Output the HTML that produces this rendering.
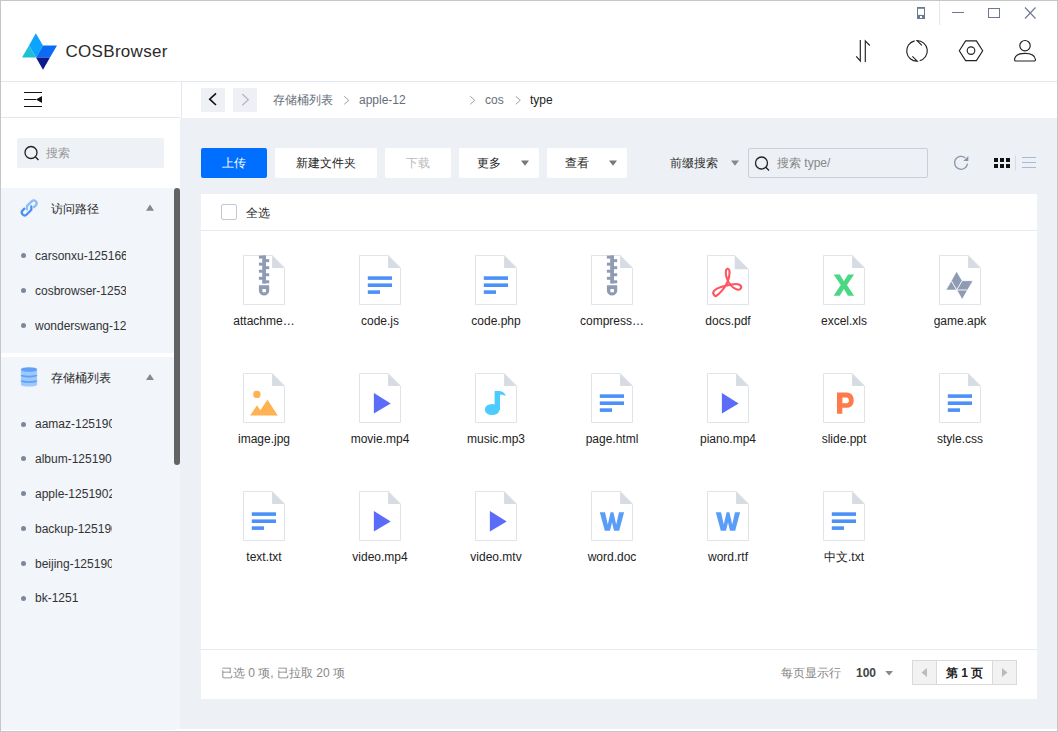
<!DOCTYPE html>
<html><head><meta charset="utf-8">
<style>
*{box-sizing:border-box;margin:0;padding:0}
html,body{width:1058px;height:732px;overflow:hidden;background:#fff}
body{position:relative;font-family:"Liberation Sans",sans-serif;font-size:12px;color:#333}
.a{position:absolute}
.t{position:absolute;white-space:nowrap;line-height:14px}
svg{position:absolute;overflow:visible}
</style></head><body>
<!-- window border -->
<div class="a" style="left:0;top:0;width:1058px;height:732px;border:1px solid #c6c6c6;z-index:50;pointer-events:none"></div>

<!-- header -->
<svg style="left:0;top:0" width="80" height="80" viewBox="0 0 80 80">
  <polygon points="22,57.6 29,45.4 36,57.6" fill="#1ec0d6"/>
  <polygon points="35.8,33.2 29,45.4 36,57.6 43,45.4" fill="#0ba5ff"/>
  <polygon points="43,45.4 57,45.4 50,57.6 36,57.6" fill="#0a6cf5"/>
  <polygon points="36,57.6 50,57.6 43,69.7" fill="#0c1a8c"/>
</svg>
<div class="t" style="left:65.5px;top:43px;font-size:17px;line-height:18px;color:#2a2a2a;letter-spacing:0.3px">COSBrowser</div>

<!-- window controls -->
<svg style="left:0;top:0" width="1058" height="30">
  <rect x="917" y="7" width="8" height="12" fill="#6b7a93"/>
  <rect x="918" y="8.8" width="6" height="6.1" fill="#fff"/>
  <rect x="920" y="16" width="2" height="2" fill="#fff"/>
  <line x1="939.5" y1="1" x2="939.5" y2="25" stroke="#e3e6ec" stroke-width="1"/>
  <line x1="952" y1="12.5" x2="964" y2="12.5" stroke="#6b7890" stroke-width="1"/>
  <rect x="988.5" y="8.5" width="11" height="9" fill="none" stroke="#6b7890" stroke-width="1"/>
  <path d="M1025 7.5 L1035.5 18.5 M1035.5 7.5 L1025 18.5" stroke="#6b7890" stroke-width="1.1"/>
</svg>

<!-- header tool icons -->
<svg style="left:0;top:0" width="1058" height="80" fill="none" stroke="#222" stroke-width="1.15">
  <path d="M860.3 40 V61 L856.2 56.3"/>
  <path d="M865.3 61.9 V40.9 L869.8 45.5"/>
  <path d="M914.6 40.83 A10.3 10.3 0 0 0 917.3 61.15 L912.4 56.4"/>
  <path d="M919.7 60.79 A10.3 10.3 0 0 0 917 40.55 L921.9 45.3"/>
  <polygon points="959.3,50.7 965.6,40.9 976.4,40.9 982.7,50.7 976.4,60.6 965.6,60.6"/>
  <circle cx="971" cy="50.6" r="3.8"/>
  <circle cx="1025" cy="45.7" r="5.2"/>
  <path d="M1016 61 H1034 A1.4 1.4 0 0 0 1035.5 59.5 C1035 55.5 1030.5 53.4 1025 53.4 C1019.5 53.4 1015 55.5 1014.5 59.5 A1.4 1.4 0 0 0 1016 61Z"/>
</svg>

<div class="a" style="left:0;top:81px;width:1058px;height:1px;background:#e3e8ef"></div>

<!-- sidebar toolbar -->
<div class="a" style="left:0;top:117px;width:180px;height:1px;background:#e3e8ef"></div>
<div class="a" style="left:181px;top:82px;width:1px;height:36px;background:#e3e8ef"></div>
<svg style="left:0;top:0" width="60" height="120">
  <line x1="24" y1="92.5" x2="42" y2="92.5" stroke="#111" stroke-width="1"/>
  <line x1="24" y1="99.5" x2="36" y2="99.5" stroke="#111" stroke-width="1"/>
  <line x1="24" y1="106.5" x2="42" y2="106.5" stroke="#111" stroke-width="1"/>
  <polygon points="36,99.5 42,96 42,103" fill="#111"/>
</svg>

<!-- sidebar search -->
<div class="a" style="left:17px;top:138px;width:147px;height:30px;background:#eef1f6;border-radius:2px"></div>
<svg style="left:0;top:0" width="60" height="180" fill="none" stroke="#222" stroke-width="1.3">
  <circle cx="31" cy="152.5" r="6"/>
  <line x1="35.3" y1="156.8" x2="38.5" y2="160"/>
</svg>
<div class="t" style="left:46px;top:146px;color:#999">搜索</div>

<!-- sidebar sections -->
<div class="a" style="left:1px;top:188px;width:179px;height:165px;background:#f2f5fa"></div>
<div class="a" style="left:1px;top:357px;width:179px;height:373px;background:#f2f5fa"></div>
<div class="a" style="left:174px;top:188px;width:6px;height:277px;background:#636363;border-radius:3px"></div>

<svg style="left:0;top:0" width="60" height="400">
  <g transform="translate(29.2 207.9) rotate(-45) scale(1.13)" fill="none" stroke-width="2.0" stroke-linecap="round">
    <path d="M-3.5 -2.55 H-5.65 A2.55 2.55 0 0 0 -5.65 2.55 H0.13 L2.26 0.42" stroke="#4a90f5"/>
    <path d="M3.5 2.55 H5.65 A2.55 2.55 0 0 0 5.65 -2.55 H-0.27 L-2.47 -0.35" stroke="#8dbcfa"/>
  </g>
  <g>
    <path d="M20.9 369.5 V384.7 A8.1 1.9 0 0 0 37.1 384.7 V369.5 Z" fill="#9fc8fc"/>
    <ellipse cx="29" cy="369.5" rx="8.1" ry="2.35" fill="#5fa1fa"/>
    <path d="M21.5 375.1 A7.5 1.45 0 0 0 36.5 375.1" fill="none" stroke="#5fa1fa" stroke-width="1.7"/>
    <path d="M21.5 380.4 A7.5 1.65 0 0 0 36.5 380.4" fill="none" stroke="#5fa1fa" stroke-width="1.7"/>
  </g>
  <polygon points="146,210.7 150,204.6 154,210.7" fill="#888"/>
  <polygon points="146,380 150,374 154,380" fill="#888"/>
</svg>
<div class="t" style="left:51px;top:202px;font-size:12px;color:#2a2a2a">访问路径</div>
<div class="t" style="left:51px;top:371px;font-size:12px;color:#2a2a2a">存储桶列表</div>

<!--SIDE-->
<div class="a" style="left:21px;top:253.0px;width:5px;height:5px;border-radius:50%;background:#7d889b"></div>
<div class="t" style="left:35px;top:248.8px;width:91px;overflow:hidden;color:#333">carsonxu-1251668577</div>
<div class="a" style="left:21px;top:288.0px;width:5px;height:5px;border-radius:50%;background:#7d889b"></div>
<div class="t" style="left:35px;top:283.8px;width:91px;overflow:hidden;color:#333">cosbrowser-1253960454</div>
<div class="a" style="left:21px;top:323.0px;width:5px;height:5px;border-radius:50%;background:#7d889b"></div>
<div class="t" style="left:35px;top:318.8px;width:91px;overflow:hidden;color:#333">wonderswang-1250000000</div>
<div class="a" style="left:21px;top:421.5px;width:5px;height:5px;border-radius:50%;background:#7d889b"></div>
<div class="t" style="left:35px;top:417.3px;width:77px;overflow:hidden;color:#333">aamaz-1251902136</div>
<div class="a" style="left:21px;top:456.3px;width:5px;height:5px;border-radius:50%;background:#7d889b"></div>
<div class="t" style="left:35px;top:452.1px;width:77px;overflow:hidden;color:#333">album-1251902136</div>
<div class="a" style="left:21px;top:491.1px;width:5px;height:5px;border-radius:50%;background:#7d889b"></div>
<div class="t" style="left:35px;top:486.9px;width:77px;overflow:hidden;color:#333">apple-1251902136</div>
<div class="a" style="left:21px;top:525.9px;width:5px;height:5px;border-radius:50%;background:#7d889b"></div>
<div class="t" style="left:35px;top:521.7px;width:77px;overflow:hidden;color:#333">backup-1251902136</div>
<div class="a" style="left:21px;top:560.7px;width:5px;height:5px;border-radius:50%;background:#7d889b"></div>
<div class="t" style="left:35px;top:556.5px;width:77px;overflow:hidden;color:#333">beijing-1251902136</div>
<div class="a" style="left:21px;top:595.5px;width:5px;height:5px;border-radius:50%;background:#7d889b"></div>
<div class="t" style="left:35px;top:591.3px;width:77px;overflow:hidden;color:#333">bk-1251</div>
<!--/SIDE-->

<!-- breadcrumb -->
<div class="a" style="left:201px;top:88px;width:24px;height:24px;background:#eef0f5"></div>
<div class="a" style="left:233px;top:88px;width:24px;height:24px;background:#eef0f5"></div>
<svg style="left:0;top:0" width="600" height="120" fill="none" stroke-width="1.5">
  <path d="M216 93.4 L209.7 99.2 L216 105" stroke="#111" stroke-width="1.6"/>
  <path d="M242.3 94.1 L248.3 99.7 L242.3 105.3" stroke="#b6bac9" stroke-width="1.4"/>
  <g stroke="#9aa0aa" stroke-width="1">
    <path d="M344.2 96.3 L348.8 100.3 L344.2 104.3"/>
    <path d="M470.2 96.3 L474.8 100.3 L470.2 104.3"/>
    <path d="M515.7 96.3 L520.3 100.3 L515.7 104.3"/>
  </g>
</svg>
<div class="t" style="left:273px;top:93px;color:#666e7a">存储桶列表</div>
<div class="t" style="left:359px;top:93px;color:#666e7a">apple-12</div>
<div class="t" style="left:485px;top:93px;color:#666e7a">cos</div>
<div class="t" style="left:530px;top:93px;color:#222">type</div>

<!-- content bg -->
<div class="a" style="left:180px;top:118px;width:877px;height:611px;background:#edf0f5"></div>

<!-- toolbar -->
<div class="a" style="left:201px;top:148px;width:66px;height:30px;background:#006eff;border-radius:2px"></div>
<div class="t" style="left:222px;top:156px;color:#fff">上传</div>
<div class="a" style="left:275px;top:148px;width:102px;height:30px;background:#fff;border-radius:2px"></div>
<div class="t" style="left:296px;top:156px;color:#222">新建文件夹</div>
<div class="a" style="left:385px;top:148px;width:66px;height:30px;background:#fff;border-radius:2px"></div>
<div class="t" style="left:406px;top:156px;color:#bbb">下载</div>
<div class="a" style="left:459px;top:148px;width:80px;height:30px;background:#fff;border-radius:2px"></div>
<div class="t" style="left:477px;top:156px;color:#222">更多</div>
<div class="a" style="left:547px;top:148px;width:80px;height:30px;background:#fff;border-radius:2px"></div>
<div class="t" style="left:565px;top:156px;color:#222">查看</div>
<div class="t" style="left:670px;top:156px;color:#333">前缀搜索</div>
<svg style="left:0;top:0" width="1058" height="200">
  <polygon points="521,160.5 529,160.5 525,165.8" fill="#777"/>
  <polygon points="609,160.5 617,160.5 613,165.8" fill="#777"/>
  <polygon points="731,160.5 739,160.5 735,165.8" fill="#888"/>
</svg>
<div class="a" style="left:748px;top:148px;width:180px;height:30px;border:1px solid #c9ced8;border-radius:2px"></div>
<svg style="left:0;top:0" width="1058" height="200" fill="none" stroke="#222" stroke-width="1.3">
  <circle cx="761.5" cy="163" r="6"/>
  <line x1="765.8" y1="167.3" x2="769" y2="170.5"/>
  <path d="M965.2 157.8 A6.5 6.5 0 1 0 967.5 163.6" stroke="#8a94a6" stroke-width="1.3"/>
  <polygon points="968.3,156 968.3,161 963.3,161" fill="#8a94a6" stroke="none"/>
  <g fill="#111" stroke="none">
    <rect x="994" y="158" width="4" height="4"/><rect x="1000" y="158" width="4" height="4"/><rect x="1006" y="158" width="4" height="4"/>
    <rect x="994" y="164" width="4" height="4"/><rect x="1000" y="164" width="4" height="4"/><rect x="1006" y="164" width="4" height="4"/>
  </g>
  <line x1="1015.5" y1="155.5" x2="1015.5" y2="170.5" stroke="#d5dae3" stroke-width="1"/>
  <g stroke="#a9b9d3" stroke-width="1">
    <line x1="1022" y1="157.5" x2="1036" y2="157.5"/>
    <line x1="1022" y1="162.5" x2="1036" y2="162.5"/>
    <line x1="1022" y1="167.5" x2="1036" y2="167.5"/>
  </g>
</svg>
<div class="t" style="left:777px;top:156px;color:#888">搜索 type/</div>

<!-- panel -->
<div class="a" style="left:201px;top:194px;width:836px;height:505px;background:#fff"></div>
<div class="a" style="left:201px;top:230px;width:836px;height:1px;background:#e6e9ef"></div>
<div class="a" style="left:201px;top:649px;width:836px;height:1px;background:#e6e9ef"></div>
<div class="a" style="left:221px;top:204px;width:16px;height:16px;border:1px solid #c4c8cf;border-radius:2px;background:#fff"></div>
<div class="t" style="left:246px;top:205.6px;color:#222">全选</div>

<!--GRID-->
<svg style="left:243px;top:255px" width="42" height="50" viewBox="0 0 42 50"><path d="M0.5 0.5 H29.1 L41.5 12.9 V49.5 H0.5 Z" fill="#fff" stroke="#dfe3ea"/><path d="M29.1 0.5 V12.9 H41.5 Z" fill="#d7dbe2"/><g fill="#8f9bb3"><rect x="19.4" y="0.5" width="3.5" height="28"/><rect x="15.9" y="0.60" width="7" height="3"/><rect x="19.4" y="4.13" width="6.8" height="3"/><rect x="15.9" y="7.66" width="7" height="3"/><rect x="19.4" y="11.19" width="6.8" height="3"/><rect x="15.9" y="14.72" width="7" height="3"/><rect x="19.4" y="18.25" width="6.8" height="3"/><rect x="15.9" y="21.78" width="7" height="3"/><rect x="19.4" y="25.31" width="6.8" height="3"/><path d="M15.9 30.3 H26.2 V35.4 A5.15 5.15 0 0 1 15.9 35.4 Z"/></g><rect x="19.4" y="34" width="3.5" height="3.2" fill="#fff"/></svg>
<div class="t" style="left:214px;top:314px;width:100px;text-align:center;color:#222">attachme…</div>
<svg style="left:359px;top:255px" width="42" height="50" viewBox="0 0 42 50"><path d="M0.5 0.5 H29.1 L41.5 12.9 V49.5 H0.5 Z" fill="#fff" stroke="#dfe3ea"/><path d="M29.1 0.5 V12.9 H41.5 Z" fill="#d7dbe2"/><g fill="#4b91f7"><rect x="8.8" y="21.3" width="24.2" height="3.6"/><rect x="8.8" y="28.4" width="24.2" height="3.6"/><rect x="8.8" y="35.3" width="12.2" height="3.6"/></g></svg>
<div class="t" style="left:330px;top:314px;width:100px;text-align:center;color:#222">code.js</div>
<svg style="left:475px;top:255px" width="42" height="50" viewBox="0 0 42 50"><path d="M0.5 0.5 H29.1 L41.5 12.9 V49.5 H0.5 Z" fill="#fff" stroke="#dfe3ea"/><path d="M29.1 0.5 V12.9 H41.5 Z" fill="#d7dbe2"/><g fill="#4b91f7"><rect x="8.8" y="21.3" width="24.2" height="3.6"/><rect x="8.8" y="28.4" width="24.2" height="3.6"/><rect x="8.8" y="35.3" width="12.2" height="3.6"/></g></svg>
<div class="t" style="left:446px;top:314px;width:100px;text-align:center;color:#222">code.php</div>
<svg style="left:591px;top:255px" width="42" height="50" viewBox="0 0 42 50"><path d="M0.5 0.5 H29.1 L41.5 12.9 V49.5 H0.5 Z" fill="#fff" stroke="#dfe3ea"/><path d="M29.1 0.5 V12.9 H41.5 Z" fill="#d7dbe2"/><g fill="#8f9bb3"><rect x="19.4" y="0.5" width="3.5" height="28"/><rect x="15.9" y="0.60" width="7" height="3"/><rect x="19.4" y="4.13" width="6.8" height="3"/><rect x="15.9" y="7.66" width="7" height="3"/><rect x="19.4" y="11.19" width="6.8" height="3"/><rect x="15.9" y="14.72" width="7" height="3"/><rect x="19.4" y="18.25" width="6.8" height="3"/><rect x="15.9" y="21.78" width="7" height="3"/><rect x="19.4" y="25.31" width="6.8" height="3"/><path d="M15.9 30.3 H26.2 V35.4 A5.15 5.15 0 0 1 15.9 35.4 Z"/></g><rect x="19.4" y="34" width="3.5" height="3.2" fill="#fff"/></svg>
<div class="t" style="left:562px;top:314px;width:100px;text-align:center;color:#222">compress…</div>
<svg style="left:707px;top:255px" width="42" height="50" viewBox="0 0 42 50"><path d="M0.5 0.5 H27.7 L41.5 14.3 V49.5 H0.5 Z" fill="#fff" stroke="#dfe3ea"/><path d="M27.7 0.5 V14.3 H41.5 Z" fill="#d7dbe2"/><path d="M7.5 40.5 C4 37.5 8 33.5 14 32 C20 30.5 28 27.5 32 29.5 C36 31.5 34 35.5 30 34.5 C26 33.5 22 29 20.5 25 C18.5 21 18 14 20.5 13.8 C23.5 13.6 23 21 20.5 27 C18 33 12 39.5 9 41 C8.5 41.3 8 41 7.5 40.5Z" fill="none" stroke="#ff5561" stroke-width="2.1"/></svg>
<div class="t" style="left:678px;top:314px;width:100px;text-align:center;color:#222">docs.pdf</div>
<svg style="left:823px;top:255px" width="42" height="50" viewBox="0 0 42 50"><path d="M0.5 0.5 H29.1 L41.5 12.9 V49.5 H0.5 Z" fill="#fff" stroke="#dfe3ea"/><path d="M29.1 0.5 V12.9 H41.5 Z" fill="#d7dbe2"/><path d="M10.6 19.6 H16.8 L20.9 26.3 L25 19.6 H31.1 L24 30 L31.1 40.8 H24.9 L20.9 34 L16.8 40.8 H10.6 L17.8 30 Z" fill="#4cd782"/></svg>
<div class="t" style="left:794px;top:314px;width:100px;text-align:center;color:#222">excel.xls</div>
<svg style="left:939px;top:255px" width="42" height="50" viewBox="0 0 42 50"><path d="M0.5 0.5 H29.1 L41.5 12.9 V49.5 H0.5 Z" fill="#fff" stroke="#dfe3ea"/><path d="M29.1 0.5 V12.9 H41.5 Z" fill="#d7dbe2"/><g fill="#8f9bb3" stroke="#fff" stroke-width="0.7" stroke-linejoin="round"><polygon points="6.9,35.11 12.32,25.65 17.75,35.11"/><polygon points="17.59,16.2 12.32,25.65 17.75,35.11 23.18,25.65"/><polygon points="23.18,25.65 34.02,25.65 28.6,35.11 17.75,35.11"/><polygon points="17.75,35.11 28.6,35.11 23.18,44.49"/></g></svg>
<div class="t" style="left:910px;top:314px;width:100px;text-align:center;color:#222">game.apk</div>
<svg style="left:243px;top:373px" width="42" height="50" viewBox="0 0 42 50"><path d="M0.5 0.5 H29.1 L41.5 12.9 V49.5 H0.5 Z" fill="#fff" stroke="#dfe3ea"/><path d="M29.1 0.5 V12.9 H41.5 Z" fill="#d7dbe2"/><g fill="#ffb254"><circle cx="13.9" cy="21.4" r="3.7"/><polygon points="7.1,42.4 14,32.3 17.3,37.2 24.5,26.8 34.8,42.4"/></g></svg>
<div class="t" style="left:214px;top:432px;width:100px;text-align:center;color:#222">image.jpg</div>
<svg style="left:359px;top:373px" width="42" height="50" viewBox="0 0 42 50"><path d="M0.5 0.5 H29.1 L41.5 12.9 V49.5 H0.5 Z" fill="#fff" stroke="#dfe3ea"/><path d="M29.1 0.5 V12.9 H41.5 Z" fill="#d7dbe2"/><polygon points="14.9,20 14.9,40.5 31.7,30.4" fill="#5b6cf9"/></svg>
<div class="t" style="left:330px;top:432px;width:100px;text-align:center;color:#222">movie.mp4</div>
<svg style="left:475px;top:373px" width="42" height="50" viewBox="0 0 42 50"><path d="M0.5 0.5 H29.1 L41.5 12.9 V49.5 H0.5 Z" fill="#fff" stroke="#dfe3ea"/><path d="M29.1 0.5 V12.9 H41.5 Z" fill="#d7dbe2"/><g fill="#4ccbff"><ellipse cx="17.2" cy="36.5" rx="7.3" ry="5.6"/><rect x="19.6" y="18" width="5.4" height="19"/><path d="M24.5 18 C27.5 18.3 30 20 30.8 23.3 C29 22 27 21.5 24.5 22 Z"/></g></svg>
<div class="t" style="left:446px;top:432px;width:100px;text-align:center;color:#222">music.mp3</div>
<svg style="left:591px;top:373px" width="42" height="50" viewBox="0 0 42 50"><path d="M0.5 0.5 H29.1 L41.5 12.9 V49.5 H0.5 Z" fill="#fff" stroke="#dfe3ea"/><path d="M29.1 0.5 V12.9 H41.5 Z" fill="#d7dbe2"/><g fill="#4b91f7"><rect x="8.8" y="21.3" width="24.2" height="3.6"/><rect x="8.8" y="28.4" width="24.2" height="3.6"/><rect x="8.8" y="35.3" width="12.2" height="3.6"/></g></svg>
<div class="t" style="left:562px;top:432px;width:100px;text-align:center;color:#222">page.html</div>
<svg style="left:707px;top:373px" width="42" height="50" viewBox="0 0 42 50"><path d="M0.5 0.5 H29.1 L41.5 12.9 V49.5 H0.5 Z" fill="#fff" stroke="#dfe3ea"/><path d="M29.1 0.5 V12.9 H41.5 Z" fill="#d7dbe2"/><polygon points="14.9,20 14.9,40.5 31.7,30.4" fill="#5b6cf9"/></svg>
<div class="t" style="left:678px;top:432px;width:100px;text-align:center;color:#222">piano.mp4</div>
<svg style="left:823px;top:373px" width="42" height="50" viewBox="0 0 42 50"><path d="M0.5 0.5 H29.1 L41.5 12.9 V49.5 H0.5 Z" fill="#fff" stroke="#dfe3ea"/><path d="M29.1 0.5 V12.9 H41.5 Z" fill="#d7dbe2"/><path d="M14 19.6 H23.5 C28 19.6 30.7 22.6 30.7 27.2 C30.7 31.8 28 34.8 23.5 34.8 H19.3 V40.8 H14 Z M19.4 24.5 V30.3 H23.2 C25 30.3 25.9 29.1 25.9 27.4 C25.9 25.7 25 24.5 23.2 24.5 Z" fill="#ff7a4a" fill-rule="evenodd"/></svg>
<div class="t" style="left:794px;top:432px;width:100px;text-align:center;color:#222">slide.ppt</div>
<svg style="left:939px;top:373px" width="42" height="50" viewBox="0 0 42 50"><path d="M0.5 0.5 H29.1 L41.5 12.9 V49.5 H0.5 Z" fill="#fff" stroke="#dfe3ea"/><path d="M29.1 0.5 V12.9 H41.5 Z" fill="#d7dbe2"/><g fill="#4b91f7"><rect x="8.8" y="21.3" width="24.2" height="3.6"/><rect x="8.8" y="28.4" width="24.2" height="3.6"/><rect x="8.8" y="35.3" width="12.2" height="3.6"/></g></svg>
<div class="t" style="left:910px;top:432px;width:100px;text-align:center;color:#222">style.css</div>
<svg style="left:243px;top:491px" width="42" height="50" viewBox="0 0 42 50"><path d="M0.5 0.5 H29.1 L41.5 12.9 V49.5 H0.5 Z" fill="#fff" stroke="#dfe3ea"/><path d="M29.1 0.5 V12.9 H41.5 Z" fill="#d7dbe2"/><g fill="#4b91f7"><rect x="8.8" y="21.3" width="24.2" height="3.6"/><rect x="8.8" y="28.4" width="24.2" height="3.6"/><rect x="8.8" y="35.3" width="12.2" height="3.6"/></g></svg>
<div class="t" style="left:214px;top:550px;width:100px;text-align:center;color:#222">text.txt</div>
<svg style="left:359px;top:491px" width="42" height="50" viewBox="0 0 42 50"><path d="M0.5 0.5 H29.1 L41.5 12.9 V49.5 H0.5 Z" fill="#fff" stroke="#dfe3ea"/><path d="M29.1 0.5 V12.9 H41.5 Z" fill="#d7dbe2"/><polygon points="14.9,20 14.9,40.5 31.7,30.4" fill="#5b6cf9"/></svg>
<div class="t" style="left:330px;top:550px;width:100px;text-align:center;color:#222">video.mp4</div>
<svg style="left:475px;top:491px" width="42" height="50" viewBox="0 0 42 50"><path d="M0.5 0.5 H29.1 L41.5 12.9 V49.5 H0.5 Z" fill="#fff" stroke="#dfe3ea"/><path d="M29.1 0.5 V12.9 H41.5 Z" fill="#d7dbe2"/><polygon points="14.9,20 14.9,40.5 31.7,30.4" fill="#5b6cf9"/></svg>
<div class="t" style="left:446px;top:550px;width:100px;text-align:center;color:#222">video.mtv</div>
<svg style="left:591px;top:491px" width="42" height="50" viewBox="0 0 42 50"><path d="M0.5 0.5 H29.1 L41.5 12.9 V49.5 H0.5 Z" fill="#fff" stroke="#dfe3ea"/><path d="M29.1 0.5 V12.9 H41.5 Z" fill="#d7dbe2"/><path d="M8.8 21.3 H14 L16.8 33.5 L19.6 21.3 H22.4 L25.2 33.5 L28 21.3 H33.1 L28.2 39.7 H23 L21 31.5 L19 39.7 H13.8 Z" fill="#5a9df8"/></svg>
<div class="t" style="left:562px;top:550px;width:100px;text-align:center;color:#222">word.doc</div>
<svg style="left:707px;top:491px" width="42" height="50" viewBox="0 0 42 50"><path d="M0.5 0.5 H29.1 L41.5 12.9 V49.5 H0.5 Z" fill="#fff" stroke="#dfe3ea"/><path d="M29.1 0.5 V12.9 H41.5 Z" fill="#d7dbe2"/><path d="M8.8 21.3 H14 L16.8 33.5 L19.6 21.3 H22.4 L25.2 33.5 L28 21.3 H33.1 L28.2 39.7 H23 L21 31.5 L19 39.7 H13.8 Z" fill="#5a9df8"/></svg>
<div class="t" style="left:678px;top:550px;width:100px;text-align:center;color:#222">word.rtf</div>
<svg style="left:823px;top:491px" width="42" height="50" viewBox="0 0 42 50"><path d="M0.5 0.5 H29.1 L41.5 12.9 V49.5 H0.5 Z" fill="#fff" stroke="#dfe3ea"/><path d="M29.1 0.5 V12.9 H41.5 Z" fill="#d7dbe2"/><g fill="#4b91f7"><rect x="8.8" y="21.3" width="24.2" height="3.6"/><rect x="8.8" y="28.4" width="24.2" height="3.6"/><rect x="8.8" y="35.3" width="12.2" height="3.6"/></g></svg>
<div class="t" style="left:794px;top:550px;width:100px;text-align:center;color:#222">中文.txt</div>
<!--/GRID-->

<!-- footer -->
<div class="t" style="left:221px;top:666px;color:#888">已选 0 项, 已拉取 20 项</div>
<div class="t" style="left:781px;top:666px;color:#888">每页显示行</div>
<div class="t" style="left:856px;top:666px;color:#444;font-weight:bold">100</div>
<svg style="left:0;top:0" width="1058" height="732">
  <polygon points="885.3,670.9 893,670.9 889.15,675.5" fill="#888"/>
</svg>
<div class="a" style="left:912px;top:660px;width:105px;height:25px;border:1px solid #d9d9d9;background:#f2f2f2"></div>
<div class="a" style="left:936px;top:661px;width:57px;height:23px;background:#fff;border-left:1px solid #d9d9d9;border-right:1px solid #d9d9d9"></div>
<svg style="left:0;top:0" width="1058" height="732">
  <polygon points="927,668 927,677 921.5,672.5" fill="#bbb"/>
  <polygon points="1002,668 1002,677 1007.5,672.5" fill="#bbb"/>
</svg>
<div class="t" style="left:946px;top:666px;color:#222;font-weight:bold">第 1 页</div>

<div class="a" style="left:175px;top:729px;width:882px;height:2px;background:#fff"></div>
</body></html>
